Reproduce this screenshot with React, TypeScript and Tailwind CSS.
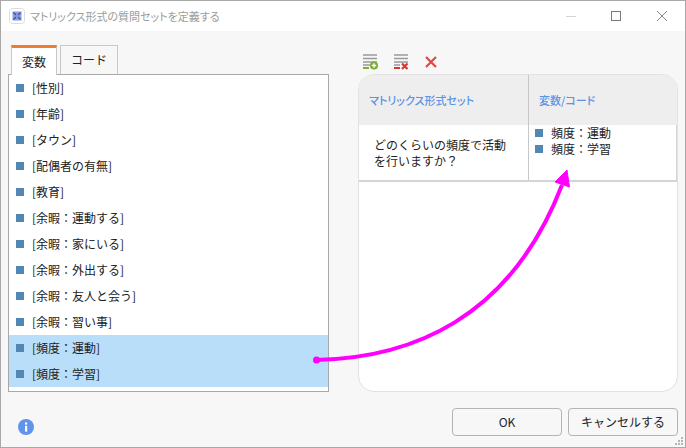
const variables = [
  '[性別]',
  '[年齢]',
  '[タウン]',
  '[配偶者の有無]',
  '[教育]',
  '[余暇\uFF1A運動する]',
  '[余暇\uFF1A家にいる]',
  '[余暇\uFF1A外出する]',
  '[余暇\uFF1A友人と会う]',
  '[余暇\uFF1A習い事]',
  '[頻度\uFF1A運動]',
  '[頻度\uFF1A学習]',
];

const Bullet = () => <span className="w-2 h-2 bg-[#5286b4] shrink-0" />;

const AddRowsIcon = () => (
  <svg width="16" height="16" viewBox="0 0 16 16">
    <path d="M0 1h14M0 4.500h14M0 8h14" stroke="#9a9a9a" strokeWidth="1.500" />
    <path d="M0 11h7" stroke="#9a9a9a" strokeWidth="1.500" />
    <path d="M0 14h6" stroke="#7cab36" strokeWidth="2" />
    <circle cx="11" cy="11.500" r="4" fill="#7cab36" />
    <path d="M8.800 11.500h4.400M11 9.300v4.400" stroke="#fff" strokeWidth="1.300" />
  </svg>
);

const RemoveRowsIcon = () => (
  <svg width="16" height="16" viewBox="0 0 16 16">
    <path d="M0 1h14M0 4.500h14M0 8h14" stroke="#9a9a9a" strokeWidth="1.500" />
    <path d="M0 11h6" stroke="#9a9a9a" strokeWidth="1.500" />
    <path d="M0 14h6" stroke="#d03a2e" strokeWidth="2" />
    <path d="M8 9.500l5.500 5.500M13.500 9.500L8 15" stroke="#d03a2e" strokeWidth="2.200" />
  </svg>
);

const App = () => {
  return (
    <div
      className="relative w-[686px] h-[448px] flex flex-col bg-[#f7f7f7] border border-[#a9a9a9] text-xs text-[#222] overflow-hidden"
      style={{ fontFamily: '"Noto Sans CJK JP", "Noto Sans", sans-serif' }}
    >
      <header className="h-[30px] bg-white flex items-center pl-[8px] shrink-0">
        <svg width="16" height="16" viewBox="0 0 16 16" className="mr-[5px]">
          <rect x="0.500" y="0.500" width="15" height="15" rx="3" fill="#fff" stroke="#dcdcdc" />
          <rect x="3.500" y="3.500" width="9" height="9" fill="#8d9be0" />
          <path d="M4.500 4.500l2.500 2.500M11.500 4.500L9 7M4.500 11.500L7 9M11.500 11.500L9 9" stroke="#3d4f9f" strokeWidth="1.200" />
        </svg>
        <span className="text-[11px] text-[#9c9c9c] [font-feature-settings:'palt']">マトリックス形式の質問セットを定義する</span>
        <div className="ml-auto flex items-center mr-[18px] mb-[1px]">
          <svg width="10" height="10" viewBox="0 0 10 10" className="mr-[35px]">
            <path d="M0 5.500h10" stroke="#d4d4d4" />
          </svg>
          <svg width="10" height="10" viewBox="0 0 10 10" className="mr-[36px]">
            <rect x="0.500" y="0.500" width="9" height="9" fill="none" stroke="#7a7a7a" />
          </svg>
          <svg width="10" height="10" viewBox="0 0 10 10">
            <path d="M0 0l10 10M10 0L0 10" stroke="#8a8a8a" />
          </svg>
        </div>
      </header>

      <main className="flex-1 flex px-[7px] pt-[14px]">
        <section className="w-[321px] shrink-0 flex flex-col">
          <div className="flex items-start h-[29px] pl-[3px] gap-[3px] relative z-10">
            <div className="w-[46px] h-[30px] bg-white border-t-[3px] border-t-[#ed7d31] border-x border-x-[#c8c8c8] flex items-center justify-center">
              変数
            </div>
            <div className="w-[58px] h-[29px] bg-[#f7f7f7] border border-b-0 border-[#c8c8c8] flex items-center justify-center">
              コード
            </div>
          </div>
          <ul className="h-[318px] bg-white border border-[#a9a9a9]">
            {variables.map((name, i) => (
              <li
                key={name}
                className={`h-[26px] flex items-center pl-[7px] gap-[8px] ${i >= 10 ? 'bg-[#b9defa]' : ''}`}
              >
                <Bullet />
                <span>{name}</span>
              </li>
            ))}
          </ul>
        </section>

        <section className="ml-[29px] flex-1 flex flex-col">
          <div className="flex items-center h-[29px] pt-[4px] pl-[5px] gap-[15px]">
            <AddRowsIcon />
            <RemoveRowsIcon />
            <svg width="12" height="12" viewBox="0 0 12 12">
              <path d="M1 1l10 10M11 1L1 11" stroke="#dc4a42" strokeWidth="2.200" />
            </svg>
          </div>
          <div className="h-[318px] bg-white border border-[#e2e2e2] rounded-[16px] overflow-hidden">
            <div className="h-[50px] bg-[#eeeeee] flex font-medium text-[11px] text-[#5c93e6] [font-feature-settings:'palt']">
              <div className="w-[170px] border-r border-[#c8c8c8] flex items-center pl-[10px]">
                マトリックス形式セット
              </div>
              <div className="flex-1 flex items-center pl-[10px]">変数/コード</div>
            </div>
            <div className="h-[57px] flex border-b-2 border-[#d4d4d4]">
              <div className="w-[170px] border-r border-[#c8c8c8] pl-[15px] pr-[20px] flex items-center leading-[16px]">
                {'どのくらいの頻度で活動を行いますか\uFF1F'}
              </div>
              <div className="flex-1 flex flex-col pl-[6px] leading-[16px] border-r border-[#d4d4d4]">
                <div className="flex items-center gap-[8px]">
                  <Bullet />
                  <span>{'頻度\uFF1A運動'}</span>
                </div>
                <div className="flex items-center gap-[8px]">
                  <Bullet />
                  <span>{'頻度\uFF1A学習'}</span>
                </div>
              </div>
            </div>
          </div>
        </section>
      </main>

      <footer className="h-[55px] shrink-0 flex items-start pt-[16px] pl-[17px] pr-[7px] relative">
        <svg width="16" height="16" viewBox="0 0 16 16" className="mt-[11px]">
          <circle cx="8" cy="8" r="8" fill="#5f94ea" />
          <rect x="7" y="6.800" width="2.200" height="5.800" fill="#fff" />
          <rect x="7" y="3.400" width="2.200" height="2.200" fill="#fff" />
        </svg>
        <button className="ml-auto w-[110px] h-[28px] bg-[#f7f7f7] border border-[#b4b4b4] rounded-[4px] text-[#222]">
          OK
        </button>
        <button className="ml-[6px] w-[110px] h-[28px] bg-[#f7f7f7] border border-[#b4b4b4] rounded-[4px] text-[#222]">
          キャンセルする
        </button>
        <svg width="10" height="10" viewBox="0 0 10 10" className="absolute right-[1px] bottom-[1px]" fill="#b5b5b5">
          <rect x="7" y="1" width="2" height="2" />
          <rect x="4" y="4" width="2" height="2" />
          <rect x="7" y="4" width="2" height="2" />
          <rect x="1" y="7" width="2" height="2" />
          <rect x="4" y="7" width="2" height="2" />
          <rect x="7" y="7" width="2" height="2" />
        </svg>
      </footer>

      <svg width="686" height="448" className="absolute -left-px -top-px pointer-events-none">
        <path d="M316 360C410 358 510 320 562 185" fill="none" stroke="#ff00ff" strokeWidth="4" />
        <path d="M567 170L555 182L569.500 187Z" fill="#ff00ff" stroke="#ff00ff" strokeWidth="1" />
        <circle cx="316.500" cy="360" r="3.500" fill="#ff00ff" />
      </svg>
    </div>
  );
};

export default App;
